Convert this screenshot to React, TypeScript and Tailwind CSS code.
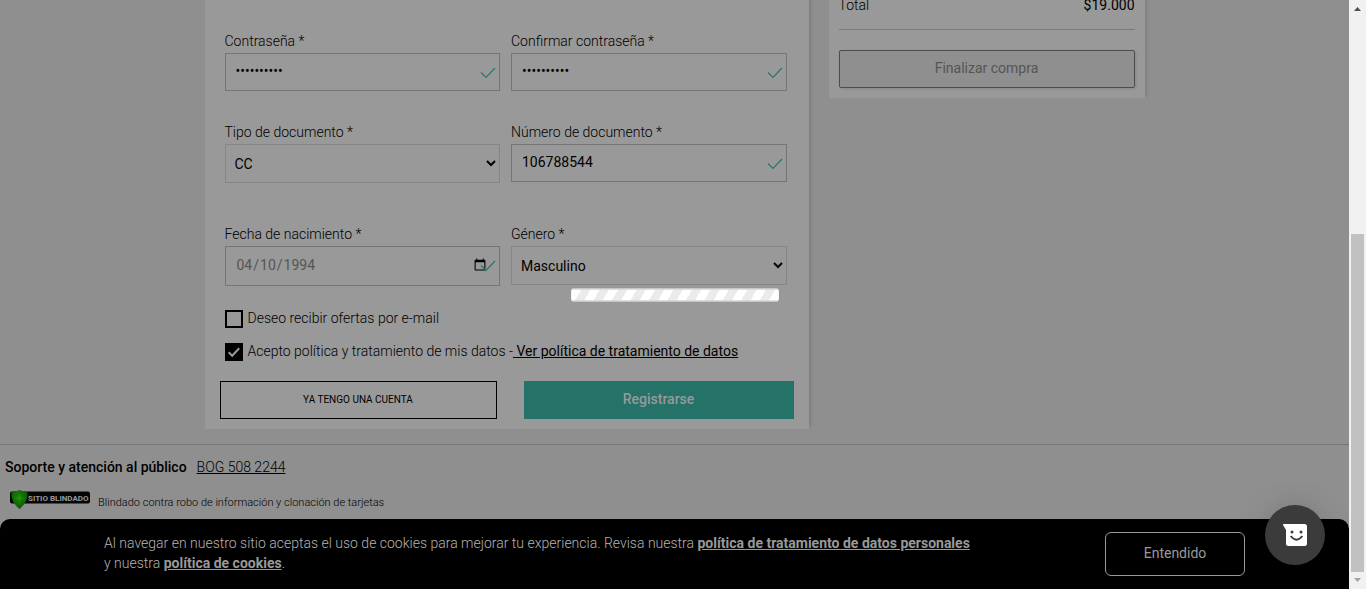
import type { ReactNode } from 'react';

function FieldCheck() {
  return (
    <svg className="pointer-events-none absolute right-1 top-[14px] h-3 w-4" viewBox="0 0 16 12" fill="none" stroke="#25786c" strokeWidth="1.2" aria-hidden="true">
      <path d="M1 5.5 L6 10.5 L15 1" />
    </svg>
  );
}

function Field({ id, label, check, children }: { id: string; label: string; check?: boolean; children: ReactNode }) {
  return (
    <div>
      <label htmlFor={id} className="mb-0.5 block text-sm leading-5 font-light text-black">
        {label} *
      </label>
      <div className="relative">
        {children}
        {check && <FieldCheck />}
      </div>
    </div>
  );
}

const inputClass = 'block h-[38px] w-full border border-[#757575] bg-transparent pr-6 pb-0.5 pl-2.5 text-sm text-black outline-none';
const selectClass = 'block h-[39px] w-full border border-[#858585] bg-transparent pl-[5px] text-sm text-black outline-none';
const checkboxClass = 'peer size-[18px] appearance-none border-2 border-black checked:bg-black';

function Checkbox({ id, checked, children }: { id: string; checked?: boolean; children: ReactNode }) {
  return (
    <div className="flex items-center gap-[5px]">
      <span className="relative flex">
        <input id={id} type="checkbox" defaultChecked={checked} className={checkboxClass} />
        <svg className="pointer-events-none absolute inset-0 hidden size-[18px] peer-checked:block" viewBox="0 0 18 18" fill="none" stroke="#999" strokeWidth="2" aria-hidden="true">
          <path d="M3.7 9.2 L7.2 12.7 L14.2 5.2" />
        </svg>
      </span>
      <span className="pb-0.5 text-sm leading-4 font-light text-black">{children}</span>
    </div>
  );
}

function RegisterForm() {
  return (
    <form className="min-w-0 flex-1 bg-[#999] pt-[31px] pb-2.5 shadow-[2px_-2px_3px_rgba(0,0,0,0.12)]">
      <div className="grid grid-cols-2 gap-x-[11px] pr-[22px] pl-5">
        <Field id="password" label="Contraseña" check>
          <input id="password" type="password" defaultValue="abcdefghij" className={inputClass} />
        </Field>
        <Field id="confirm" label="Confirmar contraseña" check>
          <input id="confirm" type="password" defaultValue="abcdefghij" className={inputClass} />
        </Field>
      </div>
      <div className="mt-[31px] grid grid-cols-2 gap-x-[11px] pr-[22px] pl-5">
        <Field id="doctype" label="Tipo de documento">
          <select id="doctype" className={selectClass}>
            <option>CC</option>
          </select>
        </Field>
        <Field id="docnumber" label="Número de documento" check>
          <input id="docnumber" type="text" defaultValue="106788544" className={inputClass} />
        </Field>
      </div>
      <div className="mt-[41px] grid grid-cols-2 gap-x-[11px] pr-[22px] pl-5">
        <Field id="birth" label="Fecha de nacimiento" check>
          <input id="birth" type="date" defaultValue="1994-04-10" className="block h-10 w-full border border-[#757575] bg-transparent pr-2.5 pb-0.5 pl-2.5 text-sm text-[#555] outline-none" />
        </Field>
        <Field id="gender" label="Género">
          <select id="gender" className={selectClass}>
            <option>Masculino</option>
          </select>
        </Field>
      </div>
      <div className="mt-6 flex flex-col gap-[15px] pl-5">
        <Checkbox id="offers">
          <label htmlFor="offers">Deseo recibir ofertas por e-mail</label>
        </Checkbox>
        <Checkbox id="policy" checked>
          <label htmlFor="policy">Acepto política y tratamiento de mis datos -</label>
          <a href="#politica" className="font-normal whitespace-pre underline"> Ver política de tratamiento de datos</a>
        </Checkbox>
      </div>
      <div className="mt-5 grid grid-cols-[277fr_270fr] gap-[27px] px-[15px]">
        <button type="button" className="h-[38px] border border-black pb-0.5 text-[10px] text-black">YA TENGO UNA CUENTA</button>
        <button type="button" className="h-[38px] bg-[#257268] pb-0.5 text-sm font-medium text-[#999]">Registrarse</button>
      </div>
    </form>
  );
}

function Summary() {
  return (
    <aside className="w-[316px] shrink-0 bg-[#999] px-2.5 pb-2.5 shadow-[2px_-2px_3px_rgba(0,0,0,0.1)]">
      <div className="flex justify-between border-b border-[#7a7a7a] pb-[19px] text-sm leading-[10px] text-black">
        <span className="font-light">Total</span>
        <span>$19.000</span>
      </div>
      <button type="button" className="mt-5 h-[38px] w-full rounded-xs border border-[#4d4d4d] bg-[#8f8f8f] pb-0.5 text-sm text-[#555] shadow-[1px_1px_3px_rgba(0,0,0,0.12)]">
        Finalizar compra
      </button>
    </aside>
  );
}

function ShieldBadge() {
  return (
    <svg className="h-5 w-20" viewBox="0 0 80 20" role="img" aria-label="Sitio Blindado">
      <defs>
        <radialGradient id="shield" cx="0.45" cy="0.4" r="0.7">
          <stop offset="0" stopColor="#1c8405" />
          <stop offset="0.6" stopColor="#0c6a02" />
          <stop offset="1" stopColor="#064501" />
        </radialGradient>
      </defs>
      <rect y="1.5" width="80" height="12" rx="2" fill="#050505" />
      <path d="M9.5 0 C7 1.2 4 1.7 1.5 2.3 C1 9 4 14.5 9.5 19 C15 14.5 18 9 17.5 2.3 C15 1.7 12 1.2 9.5 0Z" fill="url(#shield)" />
      <path d="M9.5 3 L10.3 7.5 L15 8.3 L10.3 9 L9.5 14 L8.7 9 L4 8.3 L8.7 7.5Z" fill="#39a512" opacity="0.5" />
      <text x="18" y="10.5" fill="#999" fontFamily="Roboto, sans-serif" fontSize="8" fontWeight="700">
        SITIO BLINDADO
      </text>
    </svg>
  );
}

function Footer() {
  return (
    <footer className="mt-[15px] flex-1 border-t border-[#767676] pl-[5px] text-black">
      <p className="mt-3 flex gap-2.5 text-sm leading-5">
        <span className="font-medium">Soporte y atención al público</span>
        <a href="tel:5082244" className="font-light underline">BOG 508 2244</a>
      </p>
      <div className="mt-[13px] mb-2 flex gap-2 pl-[5px]">
        <ShieldBadge />
        <p className="pt-[5px] text-[11px] leading-4 font-light">Blindado contra robo de información y clonación de tarjetas</p>
      </div>
    </footer>
  );
}

function CookieBanner() {
  return (
    <section className="flex h-[70px] items-center justify-between rounded-t-[10px] bg-black px-[104px] text-[#999]">
      <p className="max-w-[880px] pb-0.5 text-sm leading-5 font-light text-[#b3b3b3]">
        Al navegar en nuestro sitio aceptas el uso de cookies para mejorar tu experiencia. Revisa nuestra{' '}
        <a href="#datos" className="font-bold text-[#999] underline">política de tratamiento de datos personales</a>
        <br />y nuestra{' '}
        <a href="#cookies" className="font-bold text-[#999] underline">política de cookies</a>.
      </p>
      <button type="button" className="h-11 w-[140px] rounded-md border border-[#999] pb-0.5 text-sm">Entendido</button>
    </section>
  );
}

function ChatButton() {
  return (
    <button type="button" aria-label="Abrir chat" className="absolute right-6 bottom-6 flex size-[60px] items-center justify-center rounded-full bg-[#3b3b3b] shadow-[0_0_30px_rgba(0,0,0,0.15)]">
      <svg className="h-[22px] w-6" viewBox="0 0 24 22" aria-hidden="true">
        <path d="M0 0 H21.5 Q24 0 24 2.5 V19.5 Q24 22 21.5 22 H5.5 Q3 22 3 19.5 V6 L0.3 1.5Z" fill="#fff" />
        <circle cx="9" cy="8" r="1.5" fill="#3b3b3b" />
        <circle cx="18" cy="8" r="1.5" fill="#3b3b3b" />
        <path d="M7.7 12 Q13.5 19.5 19.3 12" fill="none" stroke="#3b3b3b" strokeWidth="1.9" />
      </svg>
    </button>
  );
}

function Scrollbar() {
  return (
    <div className="flex w-[17px] shrink-0 flex-col items-center bg-[#f1f1f1]" aria-hidden="true">
      <svg className="size-[17px]" viewBox="0 0 17 17"><path d="M5 11 L8.5 7 L12 11Z" fill="#505050" /></svg>
      <div className="flex-[217]" />
      <div className="w-[13px] flex-[338] bg-[#c1c1c1]" />
      <svg className="size-[17px]" viewBox="0 0 17 17"><path d="M5 6 L8.5 10 L12 6Z" fill="#a3a3a3" /></svg>
    </div>
  );
}

export default function App() {
  return (
    <div className="flex min-h-screen font-[Roboto,sans-serif]">
      <div className="relative flex min-w-0 flex-1 flex-col bg-[#8f8f8f]">
        <main className="mx-auto flex w-full max-w-[940px] items-start gap-5">
          <RegisterForm />
          <Summary />
        </main>
        <Footer />
        <CookieBanner />
        <div
          role="progressbar"
          aria-label="Cargando"
          className="absolute top-1/2 left-1/2 h-[13px] w-52 -translate-x-1/2 -translate-y-1/2 rounded-xs border border-[#f4f4f4] bg-[repeating-linear-gradient(120deg,#fff_0px,#fff_8px,#ebebeb_8px,#ebebeb_16px)]"
        />
        <ChatButton />
      </div>
      <Scrollbar />
    </div>
  );
}
